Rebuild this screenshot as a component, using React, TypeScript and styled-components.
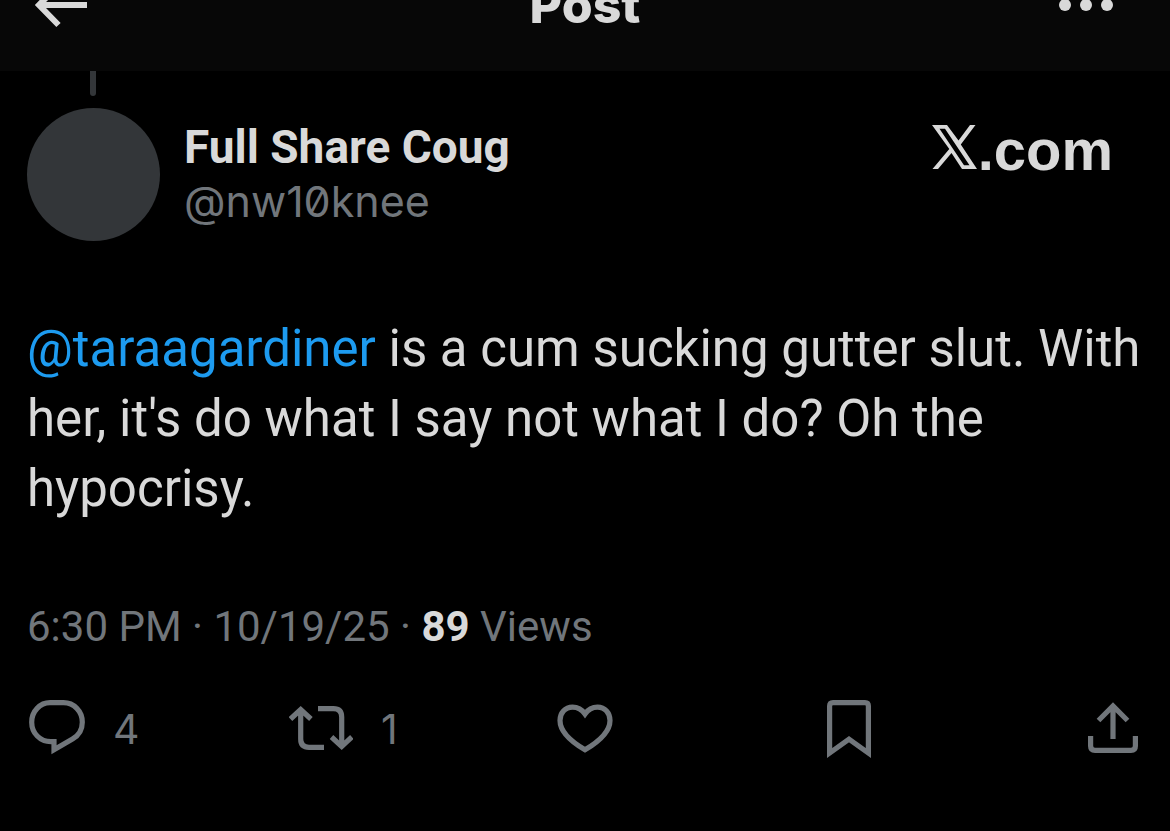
import React from 'react';
import styled, { createGlobalStyle } from 'styled-components';

const colors = {
  text: '#d9d9d9',
  muted: '#71767b',
  link: '#1d9bf0',
  surface: '#333639',
};

const GlobalStyle = createGlobalStyle`
  * { box-sizing: border-box; }
  body {
    margin: 0;
    background: #000;
    color: ${colors.text};
    font-family: Roboto, 'Liberation Sans', sans-serif;
  }
`;

const Page = styled.div`
  min-height: 100vh;
  background: #000;
`;

const Header = styled.header`
  display: grid;
  grid-template-columns: 1fr auto 1fr;
  grid-template-rows: 10px;
  align-items: center;
  height: 71px;
  padding: 0 34px;
  background: #070707;
  overflow: hidden;
`;

const Title = styled.h1`
  margin: 0;
  font: 800 50px/56px Inter, sans-serif;
`;

const IconButton = styled.button<{ $end?: boolean }>`
  display: flex;
  align-items: center;
  justify-self: ${(p) => (p.$end ? 'end' : 'start')};
  gap: 28px;
  padding: 0 ${(p) => (p.$end ? 22 : 0)}px 0 0;
  border: 0;
  background: none;
  color: inherit;
  font: inherit;
  cursor: pointer;
`;

const Icon = styled.svg`
  display: block;
  flex: none;
  fill: none;
  stroke: currentColor;
  stroke-width: 5.2;
`;

const Thread = styled.div`
  width: 6px;
  height: 25px;
  margin-left: 90px;
  border-radius: 0 0 3px 3px;
  background: ${colors.surface};
`;

const Post = styled.article`
  padding: 0 27px;
`;

const Author = styled.div`
  display: flex;
  align-items: flex-start;
  gap: 24px;
  padding-top: 12px;
`;

const Avatar = styled.div`
  width: 133px;
  height: 133px;
  border-radius: 50%;
  background: ${colors.surface};
`;

const Names = styled.div`
  flex: 1;
  padding-top: 12px;
`;

const Name = styled.div`
  font-size: 46px;
  line-height: 54px;
  font-weight: 700;
`;

const Handle = styled.div`
  color: ${colors.muted};
  font: 400 43px/54px Inter, sans-serif;
  font-feature-settings: 'zero';
`;

const Brand = styled.div`
  display: flex;
  align-items: flex-start;
  padding: 17px 30px 0 0;
  font: 700 58px/50px 'Liberation Sans', sans-serif;
`;

const Body = styled.p`
  margin: 73px 0 0;
  font-size: 51px;
  line-height: 70px;
`;

const Mention = styled.a`
  color: ${colors.link};
  text-decoration: none;
`;

const Meta = styled.div`
  margin-top: 75px;
  color: ${colors.muted};
  font-size: 42px;
  line-height: 56px;

  strong { color: ${colors.text}; }
`;

const Actions = styled.div`
  display: grid;
  grid-template-columns: 260fr 268fr 270fr 261fr auto;
  align-items: center;
  height: 58px;
  margin: 45px 5px 0 2px;
  color: ${colors.muted};
  font: 400 41px/48px Inter, sans-serif;
`;

export default function App() {
  return (
    <Page>
      <GlobalStyle />
      <Header>
        <IconButton aria-label="Back">
          <Icon width="54" height="48" viewBox="0 0 54 48">
            <path d="M53 24H6M24.500 4L5 24l19.500 20" strokeWidth="6" />
          </Icon>
        </IconButton>
        <Title>Post</Title>
        <IconButton $end aria-label="More">
          <Icon width="56" height="14" viewBox="0 0 56 14">
            <g fill="currentColor" stroke="none">
              <circle cx="7" cy="7" r="6" />
              <circle cx="28" cy="7" r="6" />
              <circle cx="49" cy="7" r="6" />
            </g>
          </Icon>
        </IconButton>
      </Header>
      <main>
        <Thread />
        <Post>
          <Author>
            <Avatar />
            <Names>
              <Name>Full Share Coug</Name>
              <Handle>@nw10knee</Handle>
            </Names>
            <Brand>
              <Icon width="46" height="44" viewBox="0 0 46 44">
                <path
                  fill="currentColor"
                  stroke="none"
                  fillRule="evenodd"
                  d="M0 0H15L26.500 15.500 38 0H43.500L28.800 19.500 45 44H30L19.500 28 6 44H.500L17.300 24ZM7.500 3.800L32 40.200H37.500L13 3.800Z"
                />
              </Icon>
              .com
            </Brand>
          </Author>
          <Body>
            <Mention href="#taraagardiner">@taraagardiner</Mention> is a cum sucking gutter slut. With
            her, it's do what I say not what I do? Oh the hypocrisy.
          </Body>
          <Meta>
            6:30 PM · 10/19/25 · <strong>89</strong> Views
          </Meta>
          <Actions>
            <IconButton aria-label="Reply, 4">
              <Icon width="56" height="58" viewBox="29 20 56 58">
                <path d="M50 22.700h13.500c10.500 0 18.800 8.600 18.800 19.500 0 7.500-4 13.500-9.800 16.800L54 69.800V61.700H51C40 61.700 31.700 53 31.700 42.200 31.700 31.300 40 22.700 50 22.700z" />
              </Icon>
              <span>4</span>
            </IconButton>
            <IconButton aria-label="Repost, 1">
              <Icon width="64" height="58" viewBox="289 20 64 58">
                <path d="M290.500 39l10.200-9.500 10.200 9.500M300.700 31v28q0 8.300 8.300 8.300h15M318 28.600h15.400q8.300 0 8.300 8.300V65M331.500 57l10.200 9.500 10.200-9.500" />
              </Icon>
              <span>1</span>
            </IconButton>
            <IconButton aria-label="Like">
              <Icon width="56" height="58" viewBox="557 20 56 58">
                <path d="M585 34C581.500 29 577 27.200 572.500 27.200 565 27.200 560 33 560 40.500 560 52 570 61 585 69.800 600 61 610 52 610 40.500 610 33 605 27.200 597.500 27.200 593 27.200 588.500 29 585 34z" />
              </Icon>
            </IconButton>
            <IconButton aria-label="Bookmark">
              <Icon width="44" height="58" viewBox="827 20 44 58">
                <path d="M829.600 73V26q0-3.400 3.400-3.400h32q3.400 0 3.400 3.400v47L849 59.200z" />
              </Icon>
            </IconButton>
            <IconButton aria-label="Share">
              <Icon width="50" height="58" viewBox="1088 20 50 58">
                <path d="M1098.500 40.500L1113 26l14.500 14.500M1113 27v32M1090.600 56v10q0 4.400 4.400 4.400h36q4.400 0 4.400-4.400V56" />
              </Icon>
            </IconButton>
          </Actions>
        </Post>
      </main>
    </Page>
  );
}
